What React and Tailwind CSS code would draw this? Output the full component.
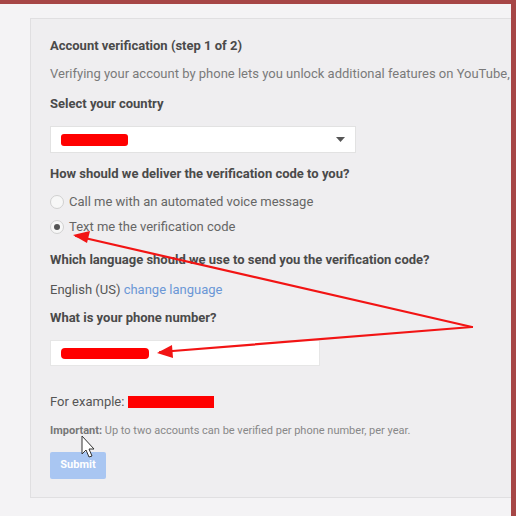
export default function App() {
  return (
    <div
      className="relative w-[516px] h-[516px] overflow-hidden bg-[#f4f3f5] border-t-[4px] border-r-[5px] border-[#a64646]"
      style={{ fontFamily: "Roboto, 'Liberation Sans', sans-serif" }}
    >
      <div className="pt-[14px] pl-[30px] w-[511px]">
        <div className="w-[481px] h-[480px] overflow-hidden bg-[#efeef0] border-l border-t border-b border-[#e0dfe1] pl-[19px] pt-[17px]">
          <div className="h-5 leading-5 text-[13px] font-bold text-[#4a4a4a]">Account verification (step 1 of 2)</div>
          <div className="mt-[8px] w-[470px] h-5 leading-5 text-[13px] text-[#7a7a7a] whitespace-nowrap">
            Verifying your account by phone lets you unlock additional features on YouTube, a
          </div>
          <div className="mt-[10px] h-5 leading-5 text-[13px] font-bold text-[#4a4a4a]">Select your country</div>
          <div className="mt-[12px] w-[306px] h-[27px] bg-white border border-[#e2e2e2] flex items-center justify-between pl-[10px] pr-[10px]">
            <div className="w-[67px] h-[12px] bg-[#ff0000] rounded-[3px]" />
            <svg width="9" height="5" viewBox="0 0 9 5"><path d="M0 0h9L4.5 5z" fill="#555" /></svg>
          </div>
          <div className="mt-[11px] h-5 leading-5 text-[13px] font-bold text-[#4a4a4a]">How should we deliver the verification code to you?</div>
          <div className="mt-[8px] h-5 flex items-center gap-[5px]">
            <div className="w-[14px] h-[14px] rounded-full border border-[#d0d0d0] bg-[#f7f7f7]" />
            <span className="leading-5 text-[13px] text-[#666]">Call me with an automated voice message</span>
          </div>
          <div className="mt-[5px] h-5 flex items-center gap-[5px]">
            <div className="w-[14px] h-[14px] rounded-full border border-[#d0d0d0] bg-[#f7f7f7] flex items-center justify-center">
              <div className="w-[6px] h-[6px] rounded-full bg-[#555]" />
            </div>
            <span className="leading-5 text-[13px] text-[#666]">Text me the verification code</span>
          </div>
          <div className="mt-[13px] h-5 leading-5 text-[13px] font-bold text-[#4a4a4a]">Which language should we use to send you the verification code?</div>
          <div className="mt-[10px] h-5 leading-5 text-[13px] text-[#555]">
            English (US) <span className="text-[#6b97d6]">change language</span>
          </div>
          <div className="mt-[8px] h-5 leading-5 text-[13px] font-bold text-[#4a4a4a]">What is your phone number?</div>
          <div className="mt-[12px] w-[270px] h-[26px] bg-white border border-[#e6e6e6] flex items-center pl-[10px]">
            <div className="w-[88px] h-[11px] bg-[#ff0000] rounded-[4px]" />
          </div>
          <div className="mt-[26px] h-5 flex items-center text-[13px] text-[#555]">
            <span className="leading-5">For example:</span>
            <div className="ml-[4px] w-[86px] h-[12px] bg-[#ff0000]" />
          </div>
          <div className="mt-[11px] h-4 leading-4 text-[11px] text-[#888] whitespace-nowrap">
            <span className="font-bold text-[#777]">Important:</span> Up to two accounts can be verified per phone number, per year.
          </div>
          <div className="mt-[13px] w-[56px] h-[27px] bg-[#a9c6f2] rounded-[2px] flex items-center justify-center text-[11px] font-bold text-white">
            Submit
          </div>
        </div>
      </div>

      <svg className="absolute left-0 top-[-4px]" width="516" height="516" viewBox="0 0 516 516">
        <g stroke="#f21414" strokeWidth="2.2" fill="none" strokeLinecap="round">
          <line x1="472" y1="327" x2="76" y2="236" />
          <line x1="472" y1="327" x2="160" y2="352" />
        </g>
        <path d="M73 235 L90 231 L87 243 Z" fill="#f21414" />
        <path d="M157 353 L172 345 L173 358 Z" fill="#f21414" />
        <path
          d="M82 436 L82 454 L86 450 L89 457 L92 456 L89 449 L94 449 Z"
          fill="#fff"
          stroke="#333"
          strokeWidth="1"
          strokeLinejoin="round"
        />
      </svg>
    </div>
  );
}
